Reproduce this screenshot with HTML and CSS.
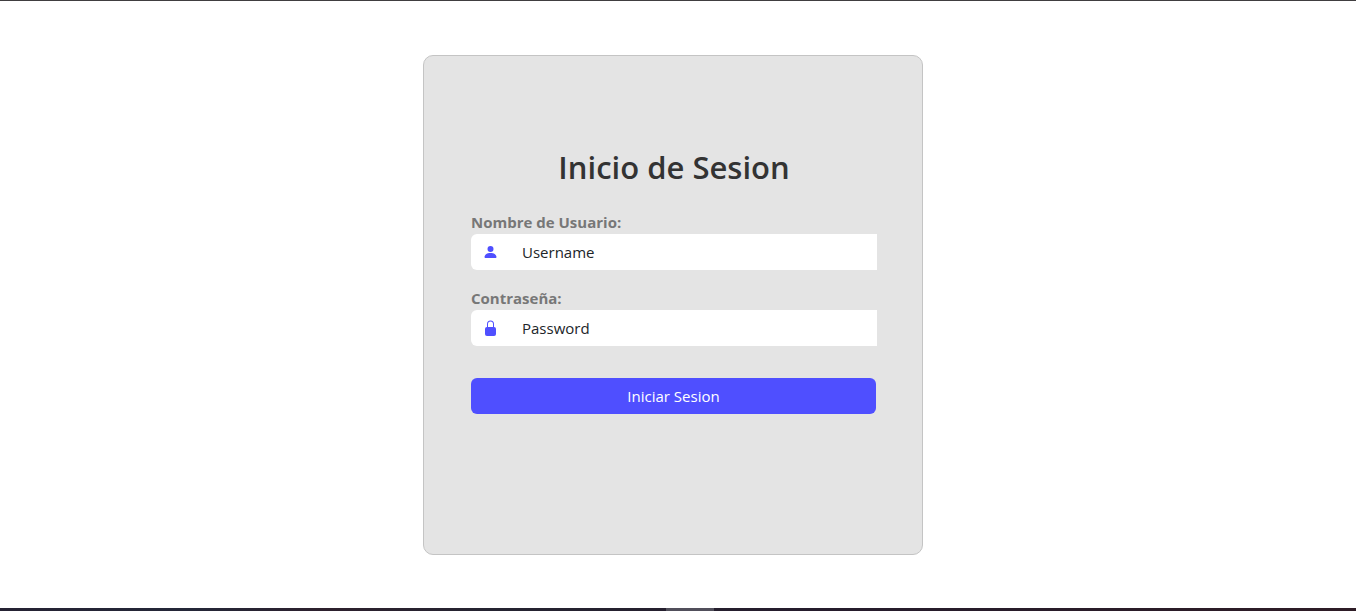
FILE: index.html
```html
<!DOCTYPE html>
<html lang="es">
<head>
<meta charset="utf-8">
<meta name="viewport" content="width=device-width, initial-scale=1">
<title>Inicio de Sesion</title>
<link rel="stylesheet" href="styles.css">
</head>
<body class="page">
<main class="content">
<form class="card">
<h1 class="title">Inicio de Sesion</h1>
<div class="field">
<label class="label" for="username">Nombre de Usuario:</label>
<div class="group">
<span class="addon"><svg class="icon" viewBox="0 0 16 16" aria-hidden="true"><path d="M2.500 14s-1 0-1-1 1-4 6-4 6 3 6 4-1 1-1 1zm5-6a3 3 0 1 0 0-6 3 3 0 0 0 0 6z"/></svg></span>
<input class="input" id="username" type="text" placeholder="Username">
</div>
</div>
<div class="field">
<label class="label" for="password">Contraseña:</label>
<div class="group">
<span class="addon"><svg class="icon" viewBox="0 0 16 16" aria-hidden="true"><path d="M2 9a2 2 0 0 1 2-2h7a2 2 0 0 1 2 2v5a2 2 0 0 1-2 2H4a2 2 0 0 1-2-2V9z"/><path d="M4 4a3.500 3.500 0 1 1 7 0v3h-1V4a2.500 2.500 0 0 0-5 0v3H4V4z"/></svg></span>
<input class="input" id="password" type="password" placeholder="Password">
</div>
</div>
<button class="submit" type="submit">Iniciar Sesion</button>
</form>
</main>
<footer class="bar"><span class="bar-active"></span></footer>
</body>
</html>
```
FILE: styles.css
```css
* { box-sizing: border-box; }
.page {
  margin: 0;
  min-height: 100vh;
  display: flex;
  flex-direction: column;
  border-top: 1px solid #403e40;
  background: #fff;
  font-family: "Segoe UI", "Open Sans", "Noto Sans", sans-serif;
  font-size: 15px;
  line-height: 24px;
  color: #212529;
}
.content {
  flex: 1;
  display: flex;
  align-items: center;
  justify-content: center;
  padding: 24px 10px 24px 0;
}
.card {
  width: 100%;
  max-width: 500px;
  min-height: 500px;
  display: flex;
  flex-direction: column;
  padding: 91px 45px 48px 47px;
  background: #e4e4e4;
  border: 1px solid #c4c4c4;
  border-radius: 10px;
}
.title {
  margin: 0 0 23px;
  font-size: 31px;
  line-height: 40px;
  font-weight: 600;
  text-align: center;
  color: #333;
}
.field { margin-bottom: 16px; }
.label {
  display: block;
  font-weight: 700;
  color: #777;
}
.group {
  display: flex;
  height: 36px;
  background: #fff;
  border-radius: 6px 0 0 6px;
}
.addon {
  display: flex;
  align-items: center;
  padding: 0 12px;
}
.icon {
  width: 16px;
  height: 16px;
  fill: #4f4fff;
}
.input {
  flex: 1;
  min-width: 0;
  border: 0;
  padding: 0 11px;
  background: transparent;
  font: inherit;
  color: inherit;
}
.input::placeholder { color: #212529; opacity: 1; }
.submit {
  height: 36px;
  margin: 16px 1px 0 0;
  border: 0;
  border-radius: 6px;
  background: #4f4fff;
  color: #fff;
  font: inherit;
}
.bar {
  display: flex;
  justify-content: center;
  height: 3px;
  padding-right: 1px;
  background: linear-gradient(90deg, #252233, #242738 14%, #2d202d 24%, #252431 36%, #251c2c 60%, #2e1c26);
}
.bar-active {
  width: 48px;
  margin-left: 24px;
  background: #514f5b;
}
```
